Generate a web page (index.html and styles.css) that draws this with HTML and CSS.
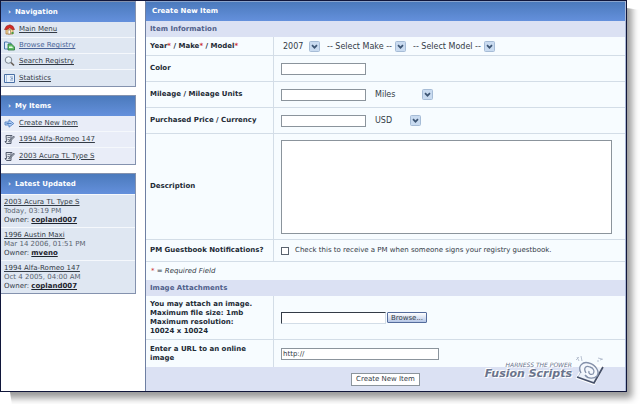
FILE: index.html
```
<!DOCTYPE html>
<html lang="en">
<head>
<meta charset="utf-8">
<title>Create New Item</title>
<link rel="stylesheet" href="styles.css">
</head>
<body>
<svg class="defs" aria-hidden="true">
  <symbol id="arrow" viewBox="0 0 11 11"><rect x=".5" y=".5" width="10" height="10" rx="1" fill="#c9dbf0" stroke="#a6bcd6"/><path d="M3 4.2 5.5 6.7 8 4.2" fill="none" stroke="#3d5573" stroke-width="1.7"/></symbol>
  <symbol id="note" viewBox="0 0 11 11"><path d="M2 1.500h6l-1 1v7H2.500L1 7.500h1.500z" fill="#dfe3ea" stroke="#525a6c"/><path d="M3.500 3.500h3M3.500 5.500h2" stroke="#7a8394"/><path d="M4.500 7.500 9.500 2l1 1-5 5z" fill="#a9b0bd" stroke="#3f4757" stroke-width=".7"/></symbol>
</svg>
<div class="frame">
  <aside class="sidebar">
    <nav class="panel">
      <h2>Navigation</h2>
      <ul>
        <li><svg viewBox="0 0 11 11"><path d="M2 5h7v5H2z" fill="#f5dfa0" stroke="#a86a32" stroke-width=".7"/><path d="M.5 5.500 2.500 2 6 .8 9 2.300l1.500 3.200H8.300L5.700 3.700 3 5.500z" fill="#d52b25" stroke="#93201c" stroke-width=".6"/><path d="M4 6h2.500v4H4z" fill="#fff" stroke="#967143" stroke-width=".6"/><path d="M7.500 8h2v2h-2z" fill="#4a9b45"/></svg><a href="#">Main Menu</a></li>
        <li class="lit"><svg viewBox="0 0 11 11"><path d="M.5 2h3l1 1H7v6H.5z" fill="#dcebf8" stroke="#4878ae"/><path d="M4 4h3.500L10.500 7v3H4z" fill="#62be69" stroke="#26743b" stroke-width=".8"/><path d="M5 6.500h3l1 1.500H5z" fill="#eaffea"/></svg><a href="#">Browse Registry</a></li>
        <li><svg viewBox="0 0 11 11"><circle cx="4.500" cy="4" r="3.300" fill="#e6f0f6" stroke="#7c8590"/><path d="M3 3.500q1-1.500 2.500-1" fill="none" stroke="#fff"/><path d="m7 6.500 3 3" stroke="#6a6259" stroke-width="1.700"/></svg><a href="#">Search Registry</a></li>
        <li><svg viewBox="0 0 11 11"><path d="M.5 1.500h10v8H.5z" fill="#e9f1fb" stroke="#486fa5"/><path d="M2.500 2v7" stroke="#a8c3e4"/><path d="M6 4h3M7 5.500h2M6 7h3" stroke="#6b8cb9" stroke-width=".8"/></svg><a href="#">Statistics</a></li>
      </ul>
    </nav>
    <section class="panel items">
      <h2>My Items</h2>
      <ul>
        <li><svg viewBox="0 0 11 11"><path d="M1 4h4V1.800L9.800 5.500 5 9.200V7H1z" fill="#b7d1f4" stroke="#5381c4" stroke-width=".9"/><path d="M2.500 5.500h5" stroke="#4f7fc4"/></svg><a href="#">Create New Item</a></li>
        <li><svg><use href="#note"/></svg><a href="#">1994 Alfa-Romeo 147</a></li>
        <li><svg><use href="#note"/></svg><a href="#">2003 Acura TL Type S</a></li>
      </ul>
    </section>
    <section class="panel latest">
      <h2>Latest Updated</h2>
      <div class="update"><a href="#">2003 Acura TL Type S</a><time>Today, 03:19 PM</time><p>Owner: <a class="owner" href="#">copland007</a></p></div>
      <div class="update"><a href="#">1996 Austin Maxi</a><time>Mar 14 2006, 01:51 PM</time><p>Owner: <a class="owner" href="#">mveno</a></p></div>
      <div class="update"><a href="#">1994 Alfa-Romeo 147</a><time>Oct 4 2005, 04:00 AM</time><p>Owner: <a class="owner" href="#">copland007</a></p></div>
    </section>
  </aside>
  <main>
    <form>
      <h1>Create New Item</h1>
      <h3>Item Information</h3>
      <div class="row short">
        <label for="year">Year<i>*</i> / Make<i>*</i> / Model<i>*</i></label>
        <div class="field">
          <span class="select year"><select id="year"><option>2007</option></select><svg><use href="#arrow"/></svg></span>
          <span class="select make"><select aria-label="Make"><option>-- Select Make --</option></select><svg><use href="#arrow"/></svg></span>
          <span class="select model"><select aria-label="Model"><option>-- Select Model --</option></select><svg><use href="#arrow"/></svg></span>
        </div>
      </div>
      <div class="row"><label for="color">Color</label><div class="field"><input class="text" id="color" type="text"></div></div>
      <div class="row"><label for="mileage">Mileage / Mileage Units</label><div class="field"><input class="text" id="mileage" type="text"><span class="select units"><select aria-label="Mileage units"><option>Miles</option></select><svg><use href="#arrow"/></svg></span></div></div>
      <div class="row"><label for="price">Purchased Price / Currency</label><div class="field"><input class="text" id="price" type="text"><span class="select currency"><select aria-label="Currency"><option>USD</option></select><svg><use href="#arrow"/></svg></span></div></div>
      <div class="row tall"><label for="description">Description</label><div class="field"><textarea id="description"></textarea></div></div>
      <div class="row check"><label for="pm">PM Guestbook Notifications?</label><div class="field"><input type="checkbox" id="pm"><label class="hint" for="pm">Check this to receive a PM when someone signs your registry guestbook.</label></div></div>
      <p class="required"><i>*</i> = Required Field</p>
      <h3>Image Attachments</h3>
      <div class="row attach"><label for="file">You may attach an image.<br>Maximum file size: 1mb<br>Maximum resolution:<br>10024 x 10024</label><div class="field file"><input id="file" type="text"><button type="button">Browse...</button></div></div>
      <div class="row link"><label for="url">Enter a URL to an online image</label><div class="field"><input class="text url" id="url" type="text" value="http://"></div></div>
      <div class="actions">
        <button type="submit">Create New Item</button>
        <div class="brand">
          <div class="words"><small>HARNESS THE POWER</small><strong>Fusion Scripts</strong></div>
          <svg viewBox="0 0 30 32"><path d="M10 10 2 25l17 6 9-17z" fill="#edf2fa" stroke="#fff" stroke-width="2"/><path d="M10 11 3 24" stroke="#b3bfd4"/><path d="m2 24 17 6 9-16" fill="none" stroke="#465069" stroke-width="1.800"/><path d="M6 20C2 13 8 8 14 10c7 2 11 9 8 13-3 3-9 3-12-1" fill="#f5f8fd" stroke="#8491aa" stroke-width="1.400"/><path d="M11 20c-3-5 0-8 4-6 4 1 5 5 3 7-2 1-5 0-4-3" fill="none" stroke="#8491aa" stroke-width="1.300"/><path d="m4 8-2-4M7 8 6 3M1 7l3-3M22 8h2M25 7l3-1M23 5l4 1" stroke="#aab4c7" stroke-width=".8"/></svg>
        </div>
      </div>
    </form>
  </main>
</div>
</body>
</html>
```
FILE: styles.css
```
* { box-sizing: border-box; }
body {
  margin: 0;
  padding: 0 13px 13px 0;
  background: #fff;
  color: #333b46;
  font: 7px/9px "DejaVu Sans", sans-serif;
}
h1, h2, h3, p, ul { margin: 0; padding: 0; }
.defs { display: none; }
input, select, textarea, button { font: inherit; color: inherit; margin: 0; }

.frame {
  display: flex;
  gap: 9px;
  background: #fff;
  border: 1px solid #10163a;
  box-shadow: 4px 5px 7px 1px #999;
  clip-path: polygon(0 0, 100% 0, 100% 8px, calc(100% + 13px) 10px, calc(100% + 13px) calc(100% + 13px), 12px calc(100% + 13px), 10px 100%, 0 100%);
}

.sidebar { display: flex; flex-direction: column; gap: 8px; width: 135px; flex: none; }
.panel { background: #dfe7f2; border: 1px solid #8492ae; border-left: 0; }
.panel h2, h1 {
  background: linear-gradient(#4b7abc, #6490dc);
  color: #fff;
  font-size: 7px;
  line-height: 20px;
}
.panel h2 { padding-left: 7px; }
.panel h2::before { content: "›"; display: inline-block; width: 7px; }
.panel ul { list-style: none; }
.panel li {
  display: flex;
  align-items: center;
  gap: 4px;
  height: 16px;
  padding-left: 3px;
  border-bottom: 1px solid #f5f8fc;
}
.panel li:last-child { border-bottom: 0; }
.panel li svg { width: 11px; height: 11px; }
.panel a { color: #333b46; }
.panel .lit a { color: #4a6498; }
.panel.items { background: #e9edf8; }
.update { padding: 3px 3px 2px; border-top: 1px solid #f5f8fc; }
.update > a, .update time { display: block; }
.update time { color: #59636f; }
.update .owner { color: #1d232d; font-weight: bold; }

main { flex: 1; min-width: 0; border-left: 1px solid #6e7fa2; border-right: 1px solid #aab8d6; background: #f7fcff; }
h1 { padding-left: 6px; border-top: 1px solid #8ba5cd; line-height: 19px; }
main h1 { font-size: 7px; }
h3 {
  padding-left: 4px;
  background: #dbe1f3;
  color: #515f8b;
  font-size: 7px;
  line-height: 16px;
}
i { color: #c33; font-style: inherit; }
.row { display: flex; min-height: 26px; border-bottom: 1px solid #d3dde7; }
.row > label {
  display: flex;
  align-items: center;
  width: 128px;
  flex: none;
  padding: 0 4px;
  border-right: 1px solid #d3dde7;
  color: #222a35;
  font-weight: bold;
}
.row.short > label { display: block; line-height: 18px; }
.row.short { min-height: 19px; }
.row.tall { min-height: 106px; }
.row.check { min-height: 22px; }
.row.attach { min-height: 44px; }
.row.link { min-height: 27px; border-bottom: 0; }
.field { display: flex; align-items: center; flex: 1; min-width: 0; padding: 0 13px 0 7px; }

.text { width: 85px; height: 12px; padding: 0 1px; border: 1px solid #8b949c; background: #fff; }
.url { width: 158px; }
textarea { width: 100%; height: 94px; border: 1px solid #8b949c; background: #fff; resize: none; }
.select { display: grid; align-items: center; font-size: 8px; }
.select > * { grid-area: 1 / 1; }
.select svg { width: 11px; height: 11px; justify-self: end; pointer-events: none; }
select { width: 100%; height: 12px; padding: 0 0 0 2px; border: 0; background: none; appearance: none; }
.year { width: 39px; }
.make { width: 81px; margin-left: 5px; }
.model { width: 84px; margin-left: 5px; }
.units { width: 60px; margin-left: 7px; }
.currency { width: 48px; margin-left: 7px; }
input[type="checkbox"] { appearance: none; width: 8px; height: 8px; border: 1px solid #59636f; background: #fff; }
.hint { margin-left: 6px; white-space: nowrap; }
.required { padding-left: 5px; font-style: italic; line-height: 18px; }
.file input { width: 105px; height: 12px; border: 1px solid #d3dde7; border-top-color: #333b46; border-left-color: #333b46; background: #fff; }
.file button {
  width: 40px;
  height: 11px;
  margin-left: 1px;
  padding: 0;
  border: 1px solid #546c9c;
  border-radius: 1px;
  background: linear-gradient(#fff, #b5c6e6);
  line-height: 8px;
}
.actions { position: relative; display: flex; align-items: center; justify-content: center; height: 24px; background: #dbe1f3; }
.actions button { height: 13px; padding: 0 4px; border: 1px solid #8b949c; background: #fff; line-height: 10px; }
.brand { position: absolute; right: 20px; bottom: 6px; display: flex; align-items: end; gap: 3px; }
.brand svg { width: 30px; height: 32px; }
.words { display: flex; flex-direction: column; align-items: end; padding-bottom: 6px; color: #6a748c; text-shadow: 1px 1px #fff, -1px -1px #fff; font-style: italic; white-space: nowrap; }
.words small { font-size: 6px; line-height: 7px; }
.words strong { font-size: 11px; line-height: 11px; }
```
